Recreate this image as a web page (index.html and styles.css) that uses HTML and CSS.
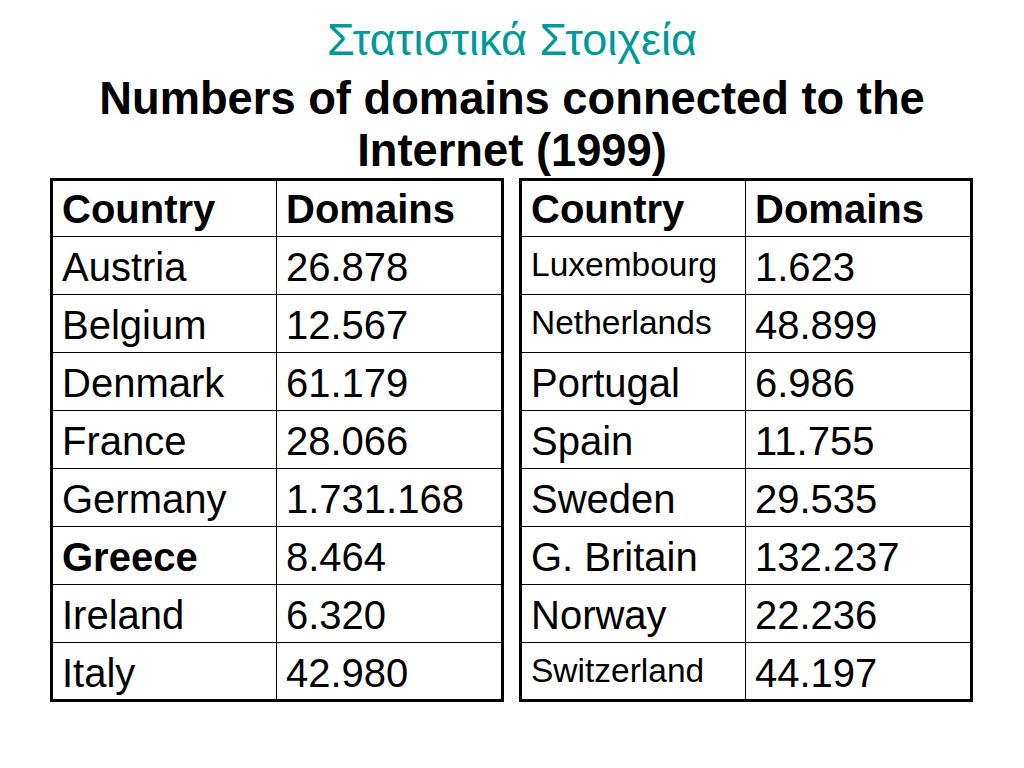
FILE: index.html
```html
<!DOCTYPE html>
<html lang="en">
<head>
<meta charset="utf-8">
<title>Στατιστικά Στοιχεία</title>
<link rel="stylesheet" href="styles.css">
</head>
<body>
<div class="slide">
  <header class="heading">
    <div class="greek">Στατιστικά Στοιχεία</div>
    <h1 class="subtitle">Numbers of domains connected to the<br>Internet (1999)</h1>
  </header>
  <div class="tables">
    <table class="data">
      <tr class="head"><th>Country</th><th>Domains</th></tr>
      <tr><td>Austria</td><td>26.878</td></tr>
      <tr><td>Belgium</td><td>12.567</td></tr>
      <tr><td>Denmark</td><td>61.179</td></tr>
      <tr><td>France</td><td>28.066</td></tr>
      <tr><td>Germany</td><td>1.731.168</td></tr>
      <tr><td class="strong">Greece</td><td>8.464</td></tr>
      <tr><td>Ireland</td><td>6.320</td></tr>
      <tr><td>Italy</td><td>42.980</td></tr>
    </table>
    <table class="data">
      <tr class="head"><th>Country</th><th>Domains</th></tr>
      <tr><td class="small">Luxembourg</td><td>1.623</td></tr>
      <tr><td class="small">Netherlands</td><td>48.899</td></tr>
      <tr><td>Portugal</td><td>6.986</td></tr>
      <tr><td>Spain</td><td>11.755</td></tr>
      <tr><td>Sweden</td><td>29.535</td></tr>
      <tr><td>G. Britain</td><td>132.237</td></tr>
      <tr><td>Norway</td><td>22.236</td></tr>
      <tr><td class="small">Switzerland</td><td>44.197</td></tr>
    </table>
  </div>
</div>
</body>
</html>
```

FILE: styles.css
```css
html, body {
  margin: 0;
  padding: 0;
  background: #ffffff;
}

body {
  font-family: "Liberation Sans", Arial, sans-serif;
  color: #000000;
}

.slide {
  width: 1024px;
  height: 768px;
  box-sizing: border-box;
  padding: 16px 50px 0 50px;
}

.heading {
  text-align: center;
}

.greek {
  font-size: 45px;
  line-height: 48px;
  color: #009999;
}

.subtitle {
  margin: 9px 0 0 0;
  font-size: 45.3px;
  line-height: 52px;
  font-weight: bold;
}

.tables {
  display: flex;
  gap: 15px;
  margin-top: 1px;
}

.data {
  border-collapse: separate;
  border-spacing: 0;
  border: 3px solid #000000;
  width: 454px;
  table-layout: fixed;
}

.data th,
.data td {
  box-sizing: border-box;
  height: 58px;
  padding: 7px 6px 0 9px;
  vertical-align: top;
  text-align: left;
  font-size: 40px;
  line-height: 46px;
  font-weight: normal;
  border-right: 1px solid #000000;
  border-bottom: 1px solid #000000;
}

.data th {
  font-weight: bold;
  height: 56px;
  padding-top: 5px;
}

.data tr:last-child td {
  border-bottom: none;
  height: 56px;
}

.data th:last-child,
.data td:last-child {
  border-right: none;
}

.data th:first-child,
.data td:first-child {
  width: 224px;
}

.data td.strong {
  font-weight: bold;
}

.data td.small {
  font-size: 33.5px;
  line-height: 40px;
  padding-top: 8px;
}
```
